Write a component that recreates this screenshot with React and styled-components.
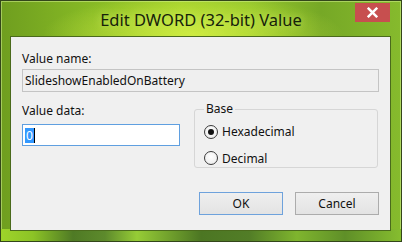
import React from "react";
import styled, { createGlobalStyle } from "styled-components";

const Global = createGlobalStyle`
  html, body { margin: 0; padding: 0; background: #ffffff; }
  body { font-family: "Noto Sans", "Open Sans", sans-serif; }
  * { box-sizing: border-box; }
`;

const Window = styled.div`
  width: 402px;
  height: 242px;
  border: 1px solid #33461a;
  box-shadow: inset 0 0 0 1px rgba(210, 240, 140, 0.55);
  display: flex;
  flex-direction: column;
  background:
    radial-gradient(ellipse 150px 40px at 48% 14%, rgba(214, 240, 70, 0.85), rgba(214, 240, 70, 0) 100%),
    linear-gradient(90deg, #6f9e1f 0%, #86b925 22%, #a2d02c 45%, #94c62c 62%, #76a826 80%, #86ba2d 100%);
  position: relative;
  overflow: hidden;
`;

const BottomShade = styled.div`
  position: absolute;
  left: 0;
  right: 0;
  bottom: 0;
  height: 12px;
  background: linear-gradient(90deg, #9ed42a 0%, #8cc326 8%, #4f7a25 18%, #5d8a2c 26%, #96cc36 34%, #4c7623 50%, #527d27 62%, #7fb52e 74%, #5f8f28 86%, #86bd2f 100%);
  pointer-events: none;
`;

const TitleBar = styled.div`
  height: 35px;
  display: flex;
  align-items: center;
  justify-content: center;
  position: relative;
`;

const Title = styled.div`
  font-family: "Noto Sans", "Open Sans", sans-serif;
  font-size: 16.5px;
  color: #16220a;
  margin-top: 2px;
  text-shadow: 0 0 8px rgba(220, 250, 120, 0.7);
`;

const CloseButton = styled.div`
  position: absolute;
  top: 2px;
  right: 11px;
  width: 35px;
  height: 19px;
  background: #c74f4f;
  display: flex;
  align-items: center;
  justify-content: center;
`;

const Client = styled.div`
  margin: 0 10px 0 9px;
  height: 195px;
  border: 1px solid #4a6a1c;
  background: #f0f0f0;
  padding: 14px 11px 0 11px;
  display: flex;
  flex-direction: column;
  position: relative;
  z-index: 1;
`;

const Label = styled.div`
  font-size: 12px;
  line-height: 16px;
  color: #111;
`;

const NameBox = styled.div`
  margin-top: 2px;
  height: 23px;
  border: 1px solid #c4c4c4;
  background: #efefef;
  font-size: 12px;
  display: flex;
  align-items: center;
  padding-left: 2px;
  color: #111;
`;

const DataRow = styled.div`
  margin-top: 11px;
  display: grid;
  grid-template-columns: 158px 1fr;
  column-gap: 14px;
  align-items: start;
`;

const DataColumn = styled.div`
  display: flex;
  flex-direction: column;
`;

const DataBox = styled.div`
  margin-top: 5px;
  height: 22px;
  border: 1px solid #5f9fe0;
  background: #ffffff;
  font-size: 12px;
  display: flex;
  align-items: center;
  padding-left: 2px;
`;

const Selected = styled.span`
  background: #3399ff;
  color: #ffffff;
  line-height: 15px;
  padding: 0 1px;
`;

const Caret = styled.span`
  display: inline-block;
  width: 1px;
  height: 15px;
  background: #000;
`;

const Group = styled.fieldset`
  margin: -1px 1px 0 0;
  padding: 7px 0 0 9px;
  border: 1px solid #d6d6d6;
  border-radius: 3px;
  height: 66px;
  display: flex;
  flex-direction: column;
  gap: 9px;
`;

const Legend = styled.legend`
  font-size: 12px;
  padding: 0 2px;
  color: #111;
  line-height: 14px;
`;

const RadioRow = styled.div`
  display: flex;
  align-items: center;
  gap: 4px;
  font-size: 12px;
  color: #111;
  height: 18px;
`;

const RadioCircle = styled.span`
  width: 14px;
  height: 14px;
  border-radius: 50%;
  border: 1px solid #3a3a3a;
  background: radial-gradient(circle at 50% 40%, #ffffff, #e8e8e8);
  display: flex;
  align-items: center;
  justify-content: center;
  &::after {
    content: "";
    width: 6px;
    height: 6px;
    border-radius: 50%;
    background: #111;
    display: ${(p) => (p.$checked ? "block" : "none")};
  }
`;

const ButtonRow = styled.div`
  margin-top: auto;
  margin-bottom: 15px;
  display: flex;
  justify-content: flex-end;
  gap: 12px;
`;

const Button = styled.div`
  width: 84px;
  height: 23px;
  border: 1px solid ${(p) => (p.$default ? "#6ea2dc" : "#acacac")};
  background: linear-gradient(180deg, #efefef, #e3e3e3);
  font-size: 12px;
  color: #111;
  display: flex;
  align-items: center;
  justify-content: center;
`;

export default function App() {
  return (
    <>
      <Global />
      <Window>
        <TitleBar>
          <Title>Edit DWORD (32-bit) Value</Title>
          <CloseButton>
            <svg width="11" height="11" viewBox="0 0 10 10">
              <path d="M1.5 1.5 L8.5 8.5 M8.5 1.5 L1.5 8.5" stroke="#ffffff" strokeWidth="2.2" strokeLinecap="square" />
            </svg>
          </CloseButton>
        </TitleBar>
        <Client>
          <Label>Value name:</Label>
          <NameBox>SlideshowEnabledOnBattery</NameBox>
          <DataRow>
            <DataColumn>
              <Label>Value data:</Label>
              <DataBox>
                <Selected>0</Selected>
                <Caret />
              </DataBox>
            </DataColumn>
            <Group>
              <Legend>Base</Legend>
              <RadioRow>
                <RadioCircle $checked />
                Hexadecimal
              </RadioRow>
              <RadioRow>
                <RadioCircle />
                Decimal
              </RadioRow>
            </Group>
          </DataRow>
          <ButtonRow>
            <Button $default>OK</Button>
            <Button>Cancel</Button>
          </ButtonRow>
        </Client>
        <BottomShade />
      </Window>
    </>
  );
}
